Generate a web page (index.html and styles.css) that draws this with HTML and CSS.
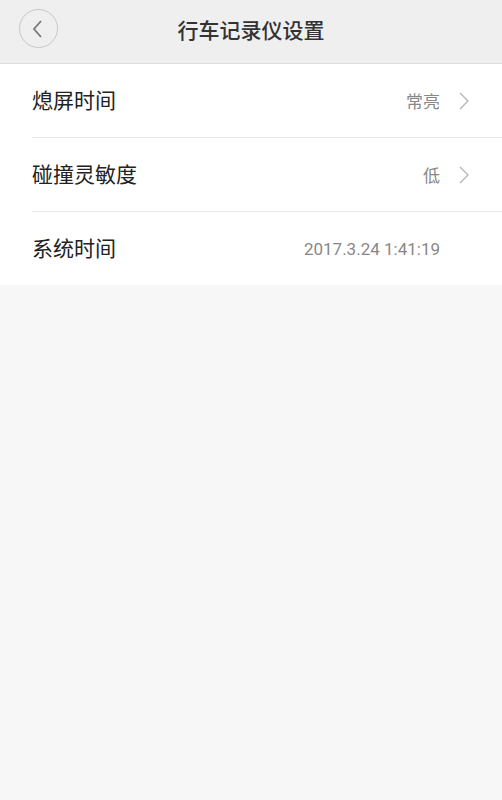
FILE: index.html
```html
<!DOCTYPE html>
<html lang="zh-CN">
<head>
  <meta charset="UTF-8">
  <meta name="viewport" content="width=device-width, initial-scale=1.0">
  <title>行车记录仪设置</title>
  <link rel="stylesheet" href="styles.css">
</head>
<body>
  <div class="header">
    <button class="back-button">
      <svg width="14" height="20" viewBox="0 0 14 20"><path d="M10 2 L3 10 L10 18" fill="none" stroke="#777" stroke-width="1.8"/></svg>
    </button>
    <h1>行车记录仪设置</h1>
  </div>

  <ul class="setting-list">
    <li class="setting-item">
      <span class="label">熄屏时间</span>
      <span class="value">常亮</span>
      <svg class="arrow" width="12" height="20" viewBox="0 0 12 20"><path d="M2 2 L10 10 L2 18" fill="none" stroke="#b4b4b4" stroke-width="1.3"/></svg>
    </li>
    <li class="setting-item">
      <span class="label">碰撞灵敏度</span>
      <span class="value">低</span>
      <svg class="arrow" width="12" height="20" viewBox="0 0 12 20"><path d="M2 2 L10 10 L2 18" fill="none" stroke="#b4b4b4" stroke-width="1.3"/></svg>
    </li>
    <li class="setting-item">
      <span class="label">系统时间</span>
      <span class="value">2017.3.24 1:41:19</span>
      <span class="arrow"></span>
    </li>
  </ul>
</body>
</html>
```

FILE: styles.css
```css
* {
  margin: 0;
  padding: 0;
  box-sizing: border-box;
}

body {
  font-family: Roboto, "Noto Sans CJK SC", sans-serif;
  background-color: #f7f7f7;
  color: #222;
  height: 100vh;
}

.header {
  height: 64px;
  background-color: #efefef;
  border-bottom: 1px solid #dcdcdc;
  display: flex;
  align-items: center;
  justify-content: center;
  position: relative;
}

.header h1 {
  font-size: 21px;
  font-weight: 500;
  color: #333;
  margin-top: -6px;
}

.back-button {
  position: absolute;
  left: 19px;
  top: 9px;
  width: 39px;
  height: 39px;
  border-radius: 50%;
  border: 1px solid #c8c8c8;
  background: none;
  display: flex;
  align-items: center;
  justify-content: center;
  padding-right: 2px;
}

.setting-list {
  list-style-type: none;
  background-color: #fff;
  padding-left: 32px;
}

.setting-item {
  height: 74px;
  display: flex;
  align-items: center;
  border-bottom: 1px solid #e8e8e8;
}

.setting-item:last-child {
  border-bottom: none;
  height: 73px;
}

.label {
  font-size: 21px;
  flex: 1;
  color: #222;
  padding-bottom: 3px;
}

.value {
  font-size: 17px;
  color: #888;
}

.arrow {
  width: 12px;
  margin-left: 18px;
  margin-right: 32px;
}
```
